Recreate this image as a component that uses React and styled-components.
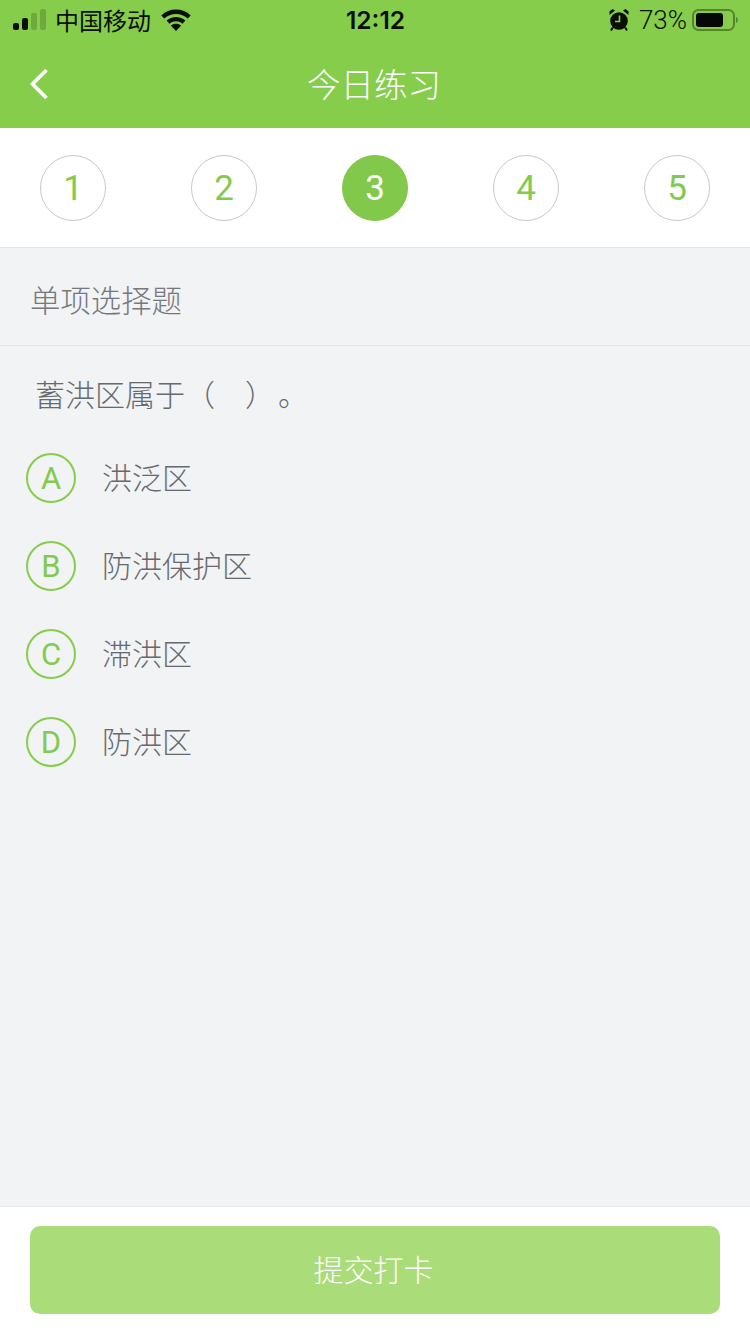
import styled, { createGlobalStyle } from "styled-components";

const GlobalStyle = createGlobalStyle`
    html, body {
        margin: 0;
        padding: 0;
        background: #f1f3f5;
    }
    * {
        box-sizing: border-box;
    }
`;

const Page = styled.div`
    width: 750px;
    height: 1334px;
    display: flex;
    flex-direction: column;
    background: #f1f3f5;
    font-family: "Liberation Sans", "Noto Sans CJK SC", sans-serif;
    overflow: hidden;
`;
const Header = styled.div`
    height: 128px;
    background: #86cd4b;
    display: flex;
    flex-direction: column;
`;
const StatusBar = styled.div`
    height: 40px;
    padding: 0 12px 0 13px;
    display: flex;
    align-items: center;
    justify-content: space-between;
    color: #0a0f05;
    font-size: 25px;
`;
const StatusSide = styled.div`
    width: 260px;
    display: flex;
    align-items: center;
    justify-content: ${(p) => (p.$right ? "flex-end" : "flex-start")};
`;
const Carrier = styled.span`
    margin-left: 8px;
    margin-right: 10px;
    padding-bottom: 2px;
    font-size: 24px;
`;
const Time = styled.span`
    font-family: "Inter", sans-serif;
    font-size: 24.5px;
    font-weight: 600;
`;
const Percent = styled.span`
    margin: 0 5px 0 10px;
    font-family: "Roboto", sans-serif;
    font-size: 26px;
    font-weight: 300;
`;
const NavBar = styled.div`
    flex: 1;
    padding: 0 0 0 28px;
    display: flex;
    align-items: center;
`;
const NavTitle = styled.div`
    position: absolute;
    left: 0;
    width: 748px;
    margin-top: -3px;
    text-align: center;
    color: #fff;
    font-size: 33.5px;
    font-weight: 300;
`;
const Steps = styled.div`
    height: 120px;
    padding: 0 40px 0;
    display: flex;
    align-items: center;
    justify-content: space-between;
    background: #fff;
    border-bottom: 1px solid #e4e6e8;
`;
const Step = styled.div`
    width: 66px;
    height: 66px;
    padding-top: 1px;
    border-radius: 50%;
    display: flex;
    align-items: center;
    justify-content: center;
    font-family: "Roboto", sans-serif;
    font-size: 35px;
    font-weight: 400;
    color: ${(p) => (p.$active ? "#fff" : "#84ca4e")};
    background: ${(p) => (p.$active ? "#82c84b" : "#fff")};
    border: 1px solid ${(p) => (p.$active ? "#82c84b" : "#c9c9c9")};
`;
const SectionTitle = styled.div`
    height: 98px;
    padding: 4px 0 0 30px;
    display: flex;
    align-items: center;
    font-size: 30.4px;
    font-weight: 300;
    color: #75787c;
    border-bottom: 1px solid #e4e6e8;
`;
const Content = styled.div`
    flex: 1;
`;
const Question = styled.div`
    display: flex;
    padding: 28px 0 0 35px;
    height: 107px;
    line-height: 44px;
    font-size: 30px;
    font-weight: 300;
    color: #666a6e;
    white-space: pre;
`;
const Period = styled.span`
    margin-left: 3px;
`;
const Options = styled.div`
    display: flex;
    flex-direction: column;
    gap: 38px;
    padding-left: 26px;
`;
const Option = styled.div`
    display: flex;
    align-items: center;
    gap: 26px;
`;
const Letter = styled.div`
    width: 50px;
    height: 50px;
    border-radius: 50%;
    border: 2px solid #86cd4b;
    display: flex;
    align-items: center;
    justify-content: center;
    font-family: "Roboto", sans-serif;
    font-size: 31px;
    font-weight: 400;
    color: #84ca4e;
`;
const OptionText = styled.div`
    padding-bottom: 5px;
    font-size: 30px;
    font-weight: 300;
    color: #666a6e;
`;
const Footer = styled.div`
    height: 128px;
    padding: 19px 30px 0;
    background: #fff;
    border-top: 1px solid #e6e8eb;
`;
const SubmitButton = styled.button`
    display: block;
    width: 100%;
    height: 88px;
    padding: 0 3px 4px 0;
    border: none;
    border-radius: 10px;
    background: #aadc79;
    color: #fff;
    font-family: inherit;
    font-size: 30px;
    font-weight: 300;
`;

const Signal = () => (
    <svg width="34" height="22" viewBox="0 0 34 22">
        <rect x="0" y="14" width="6" height="7" rx="2" fill="#0a0f05" />
        <rect x="9" y="9" width="6" height="12" rx="2" fill="#0a0f05" />
        <rect x="18" y="4" width="6" height="17" rx="2" fill="#6fa83f" />
        <rect x="27" y="0" width="6" height="21" rx="2" fill="#6fa83f" />
    </svg>
);

const Wifi = () => (
    <svg width="30" height="22" viewBox="0 0 30 22" fill="none">
        <path d="M1.8 8C9.2 1 20.8 1 28.2 8" stroke="#0a0f05" strokeWidth="4.4" />
        <path d="M7 13.2c4.6-4 11.4-4 16 0" stroke="#0a0f05" strokeWidth="4.2" />
        <path d="M9.8 16.6c3.2-2.6 7.2-2.6 10.4 0L15 22z" fill="#0a0f05" />
    </svg>
);

const Alarm = () => (
    <svg width="20" height="22" viewBox="0 0 20 22">
        <circle cx="10" cy="12" r="8.8" fill="#0a0f05" />
        <path d="M10.5 6.5V12.5H6" stroke="#86cd4b" strokeWidth="1.6" fill="none" />
        <path d="M0.6 6 6 1.6 3.4 0 .4 2.4zM19.4 6 14 1.6 16.6 0l3 2.4z" fill="#0a0f05" />
        <path d="M3.8 18.5 2 21.5M16.2 18.5 18 21.5" stroke="#0a0f05" strokeWidth="2" />
    </svg>
);

const Battery = () => (
    <svg width="46" height="22" viewBox="0 0 46 22">
        <rect x="1" y="1" width="41" height="20" rx="5.5" fill="none" stroke="#55852f" strokeWidth="2" />
        <rect x="4" y="4" width="27" height="14" rx="3" fill="#050805" />
        <path d="M44 8c1.4.6 1.8 1.800 1.800 3s-.4 2.400-1.800 3z" fill="#55852f" />
    </svg>
);

const BackIcon = () => (
    <svg width="22" height="34" viewBox="0 0 22 34" fill="none">
        <path d="M18.5 3 4.500 17l14 14" stroke="#fff" strokeWidth="3.6" />
    </svg>
);

const steps = [1, 2, 3, 4, 5];
const options = [
    { key: "A", text: "洪泛区" },
    { key: "B", text: "防洪保护区" },
    { key: "C", text: "滞洪区" },
    { key: "D", text: "防洪区" },
];

const App = () => {
    return (
        <Page>
            <GlobalStyle />
            <Header>
                <StatusBar>
                    <StatusSide>
                        <Signal />
                        <Carrier>中国移动</Carrier>
                        <Wifi />
                    </StatusSide>
                    <Time>12:12</Time>
                    <StatusSide $right>
                        <Alarm />
                        <Percent>73%</Percent>
                        <Battery />
                    </StatusSide>
                </StatusBar>
                <NavBar>
                    <NavTitle>今日练习</NavTitle>
                    <BackIcon />
                </NavBar>
            </Header>
            <Steps>
                {steps.map((n) => (
                    <Step key={n} $active={n === 3}>{n}</Step>
                ))}
            </Steps>
            <SectionTitle>单项选择题</SectionTitle>
            <Content>
                <Question>蓄洪区属于（　）<Period>。</Period></Question>
                <Options>
                    {options.map((o) => (
                        <Option key={o.key}>
                            <Letter>{o.key}</Letter>
                            <OptionText>{o.text}</OptionText>
                        </Option>
                    ))}
                </Options>
            </Content>
            <Footer>
                <SubmitButton>提交打卡</SubmitButton>
            </Footer>
        </Page>
    );
};

export default App;
